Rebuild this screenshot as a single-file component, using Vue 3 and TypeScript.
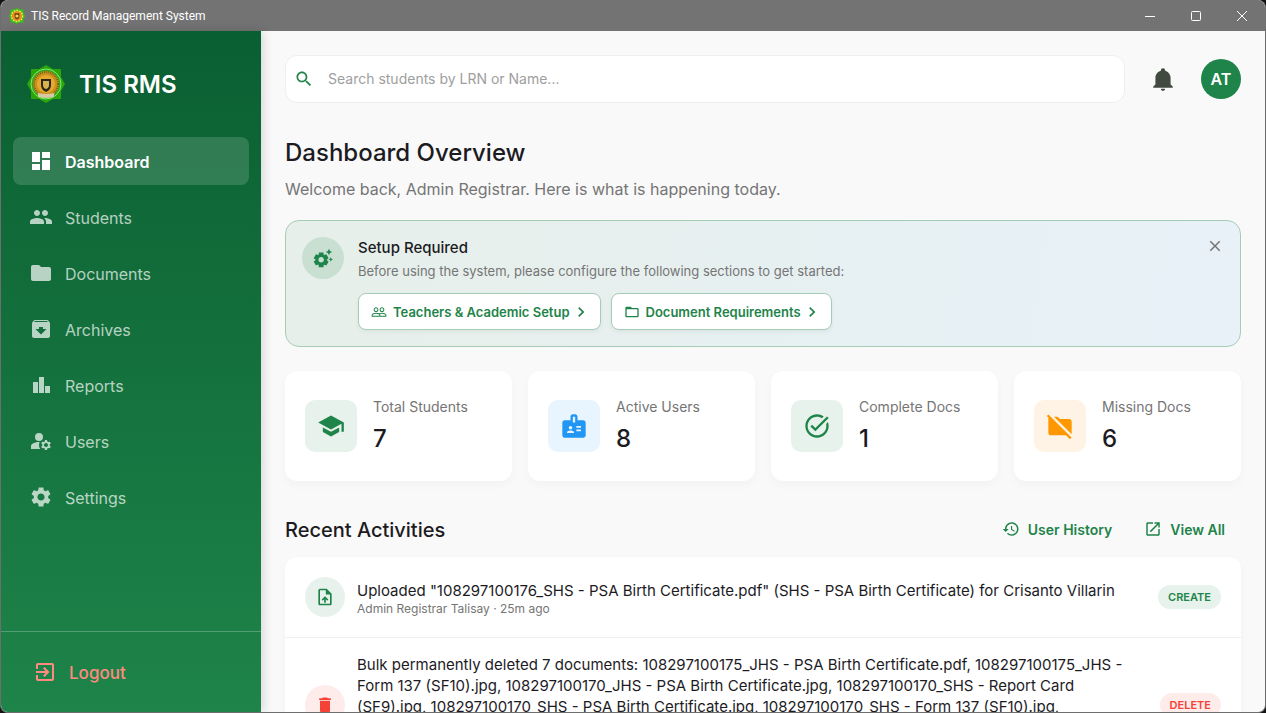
<script setup lang="ts">
import { ref } from 'vue'

interface NavItem {
  label: string
  icon: string
}

interface Stat {
  label: string
  value: number
  tone: string
  icon: string
}

interface Activity {
  lines: string[]
  meta: string
  action: string
  tone: string
  icon: string
}

const nav: NavItem[] = [
  { label: 'Dashboard', icon: 'M3 13h8V3H3v10zm0 8h8v-6H3v6zm10 0h8V11h-8v10zm0-18v6h8V3h-8z' },
  {
    label: 'Students',
    icon: 'M16 11c1.66 0 2.99-1.34 2.99-3S17.66 5 16 5c-1.66 0-3 1.34-3 3s1.34 3 3 3zm-8 0c1.66 0 2.99-1.34 2.99-3S9.66 5 8 5C6.34 5 5 6.34 5 8s1.34 3 3 3zm0 2c-2.33 0-7 1.17-7 3.5V19h14v-2.5c0-2.33-4.67-3.5-7-3.5zm8 0c-.29 0-.62.02-.97.05 1.16.84 1.97 1.97 1.97 3.45V19h6v-2.5c0-2.33-4.67-3.5-7-3.5z',
  },
  {
    label: 'Documents',
    icon: 'M10 4H4c-1.1 0-1.99.9-1.99 2L2 18c0 1.1.9 2 2 2h16c1.1 0 2-.9 2-2V8c0-1.1-.9-2-2-2h-8l-2-2z',
  },
  {
    label: 'Archives',
    icon: 'M20.54 5.23l-1.39-1.68C18.88 3.21 18.47 3 18 3H6c-.47 0-.88.21-1.16.55L3.46 5.23C3.17 5.57 3 6.02 3 6.5V19c0 1.1.9 2 2 2h14c1.1 0 2-.9 2-2V6.5c0-.48-.17-.93-.46-1.27zM12 17.5L6.5 12H10v-2h4v2h3.5L12 17.5zM5.12 5l.81-1h12l.94 1H5.12z',
  },
  { label: 'Reports', icon: 'M4 20V9h5v11zM10 20V4h5v16zM16 20v-7h5v7z' },
  {
    label: 'Users',
    icon: 'M10 4a4 4 0 1 0 0 8 4 4 0 0 0 0-8zM10.67 13.02C10.45 13.01 10.23 13 10 13c-2.42 0-4.68.67-6.61 1.82C2.51 15.34 2 16.32 2 17.35V20h9.26C10.47 18.87 10 17.49 10 16c0-1.07.25-2.07.67-2.98zM20.75 16c0-.22-.03-.42-.06-.63l1.14-1.01-1-1.73-1.45.49c-.32-.27-.68-.48-1.08-.63L18 11h-2l-.3 1.49c-.4.15-.76.36-1.08.63l-1.45-.49-1 1.73 1.14 1.01c-.03.21-.06.41-.06.63s.03.42.06.63l-1.14 1.01 1 1.73 1.45-.49c.32.27.68.48 1.08.63L16 21h2l.3-1.49c.4-.15.76-.36 1.08-.63l1.45.49 1-1.73-1.14-1.01c.03-.21.06-.41.06-.63zM17 18c-1.1 0-2-.9-2-2s.9-2 2-2 2 .9 2 2-.9 2-2 2z',
  },
  {
    label: 'Settings',
    icon: 'M19.14 12.94c.04-.3.06-.61.06-.94 0-.32-.02-.64-.07-.94l2.03-1.58c.18-.14.23-.41.12-.61l-1.92-3.32c-.12-.22-.37-.29-.59-.22l-2.39.96c-.5-.38-1.03-.7-1.62-.94l-.36-2.54c-.04-.24-.24-.41-.48-.41h-3.84c-.24 0-.43.17-.47.41l-.36 2.54c-.59.24-1.13.57-1.62.94l-2.39-.96c-.22-.08-.47 0-.59.22L2.74 8.87c-.12.21-.08.47.12.61l2.03 1.58c-.05.3-.09.63-.09.94s.02.64.07.94l-2.03 1.58c-.18.14-.23.41-.12.61l1.92 3.32c.12.22.37.29.59.22l2.39-.96c.5.38 1.03.7 1.62.94l.36 2.54c.05.24.24.41.48.41h3.84c.24 0 .44-.17.47-.41l.36-2.54c.59-.24 1.13-.56 1.62-.94l2.39.96c.22.08.47 0 .59-.22l1.92-3.32c.12-.22.07-.47-.12-.61l-2.01-1.58zM12 15.6c-1.98 0-3.6-1.62-3.6-3.6s1.62-3.6 3.6-3.6 3.6 1.62 3.6 3.6-1.62 3.6-3.6 3.6z',
  },
]

const stats: Stat[] = [
  {
    label: 'Total Students',
    value: 7,
    tone: 'green',
    icon: 'M5 13.18v4L12 21l7-3.82v-4L12 17l-7-3.82zM12 3L1 9l11 6 9-4.91V17h2V9L12 3z',
  },
  {
    label: 'Active Users',
    value: 8,
    tone: 'blue',
    icon: 'M20 7h-5V4c0-1.1-.9-2-2-2h-2c-1.1 0-2 .9-2 2v3H4c-1.1 0-2 .9-2 2v11c0 1.1.9 2 2 2h16c1.1 0 2-.9 2-2V9c0-1.1-.9-2-2-2zM9 12c.83 0 1.5.67 1.5 1.5S9.83 15 9 15s-1.5-.67-1.5-1.5S8.17 12 9 12zm3 6H6v-.75c0-1 2-1.5 3-1.5s3 .5 3 1.5V18zm1-9h-2V4h2v5zm5 7.5h-4V15h4v1.5zm0-3h-4V12h4v1.5z',
  },
  {
    label: 'Complete Docs',
    value: 1,
    tone: 'green',
    icon: 'M22 5.18L10.59 16.6l-4.24-4.24 1.41-1.41 2.83 2.83 10-10L22 5.18zm-2.21 5.04c.13.57.21 1.17.21 1.78 0 4.42-3.58 8-8 8s-8-3.58-8-8 3.58-8 8-8c1.58 0 3.04.46 4.28 1.25l1.44-1.44C16.1 2.67 14.13 2 12 2 6.48 2 2 6.48 2 12s4.48 10 10 10 10-4.48 10-10c0-1.19-.22-2.33-.6-3.39l-1.61 1.61z',
  },
  {
    label: 'Missing Docs',
    value: 6,
    tone: 'orange',
    icon: 'M20 6h-8l-2-2H6.83l14.93 14.93c.15-.28.24-.59.24-.93V8c0-1.1-.9-2-2-2zM2.1 2.1.69 3.51 2.2 5.02C2.08 5.3 2 5.65 2 6v12c0 1.1.9 2 2 2h13.17l3.31 3.31 1.41-1.41L2.1 2.1z',
  },
]

const activities: Activity[] = [
  {
    lines: ['Uploaded "108297100176_SHS - PSA Birth Certificate.pdf" (SHS - PSA Birth Certificate) for Crisanto Villarin'],
    meta: 'Admin Registrar Talisay · 25m ago',
    action: 'CREATE',
    tone: 'green',
    icon: 'M14 2H6c-1.1 0-1.99.9-1.99 2L4 20c0 1.1.89 2 1.99 2H18c1.1 0 2-.9 2-2V8l-6-6zm4 18H6V4h7v5h5v11zM8 15.01l1.41 1.41L11 14.84V19h2v-4.16l1.59 1.59L16 15.01 12.01 11 8 15.01z',
  },
  {
    lines: [
      'Bulk permanently deleted 7 documents: 108297100175_JHS - PSA Birth Certificate.pdf, 108297100175_JHS -',
      'Form 137 (SF10).jpg, 108297100170_JHS - PSA Birth Certificate.jpg, 108297100170_SHS - Report Card',
      '(SF9).jpg, 108297100170_SHS - PSA Birth Certificate.jpg, 108297100170_SHS - Form 137 (SF10).jpg,',
    ],
    meta: '',
    action: 'DELETE',
    tone: 'red',
    icon: 'M6 19c0 1.1.9 2 2 2h8c1.1 0 2-.9 2-2V7H6v12zM19 4h-3.5l-1-1h-5l-1 1H5v2h14V4z',
  },
]

const active = ref('Dashboard')
const query = ref('')
const setupVisible = ref(true)
</script>

<template>
  <div class="window">
    <header class="titlebar">
      <svg class="titlebar-logo" viewBox="0 0 40 40" aria-hidden="true">
        <path d="M20 0l7 4h9v9l4 7-4 7v9h-9l-7 4-7-4H4v-9l-4-7 4-7V4h9z" fill="#35c512" />
        <circle cx="20" cy="20" r="14" fill="#e8901c" stroke="#e6f36a" stroke-width="3" stroke-dasharray="4 3" />
        <path d="M14 13h12v8q0 6-6 8-6-2-6-8z" fill="#6b3d13" />
        <circle cx="20" cy="20" r="4" fill="#f2d25a" />
      </svg>
      <span class="titlebar-text">TIS Record Management System</span>
      <button class="caption" type="button" aria-label="Minimize">
        <svg width="12" height="12" viewBox="0 0 12 12"><path d="M1 6.5h10" /></svg>
      </button>
      <button class="caption" type="button" aria-label="Maximize">
        <svg width="12" height="12" viewBox="0 0 12 12"><rect x="1.5" y="1.5" width="9" height="9" rx="1" /></svg>
      </button>
      <button class="caption" type="button" aria-label="Close window">
        <svg width="12" height="12" viewBox="0 0 12 12"><path d="M1 1l10 10M11 1L1 11" /></svg>
      </button>
    </header>

    <div class="body">
      <aside class="sidebar">
        <div class="brand">
          <svg width="40" height="40" viewBox="0 0 40 40" aria-hidden="true">
            <path d="M20 1l7 4h7q1 0 1 1v7l4 7-4 7v7q0 1-1 1h-7l-7 4-7-4H6q-1 0-1-1v-7l-4-7 4-7V6q0-1 1-1h7z" fill="#2aa50b" />
            <circle cx="20" cy="20" r="15" fill="#35a51a" stroke="#7dee6a" stroke-width="1" />
            <circle cx="20" cy="20" r="13" fill="#c9921f" />
            <circle cx="20" cy="20" r="12" fill="none" stroke="#6e6418" stroke-width="2" stroke-dasharray="1 1" />
            <circle cx="20" cy="20" r="9" fill="#e9a82c" />
            <path d="M15 15h10v6q0 5-5 7-5-2-5-7z" fill="#2b2817" />
            <path d="M17 17h6v4q0 3-3 4-3-1-3-4z" fill="#d9b352" />
            <path d="M12 29q8 2 16 0v4q-8 2-16 0z" fill="#d6c8a4" />
          </svg>
          <span class="brand-name">TIS RMS</span>
        </div>

        <nav class="nav">
          <a
            v-for="item in nav"
            :key="item.label"
            href="#"
            class="nav-item"
            :class="{ active: active === item.label }"
            @click.prevent="active = item.label"
          >
            <svg width="24" height="24" viewBox="0 0 24 24" aria-hidden="true"><path :d="item.icon" /></svg>
            <span>{{ item.label }}</span>
          </a>
        </nav>

        <div class="logout-area">
          <button class="logout" type="button">
            <svg width="24" height="24" viewBox="0 0 24 24" aria-hidden="true">
              <path d="M10.09 15.59L11.5 17l5-5-5-5-1.41 1.41L12.67 11H3v2h9.67l-2.58 2.59zM19 3H5c-1.11 0-2 .9-2 2v4h2V5h14v14H5v-4H3v4c0 1.1.89 2 2 2h14c1.1 0 2-.9 2-2V5c0-1.1-.9-2-2-2z" />
            </svg>
            <span>Logout</span>
          </button>
        </div>
      </aside>

      <main class="main">
        <div class="topbar">
          <label class="search">
            <svg width="20" height="20" viewBox="0 0 24 24" aria-hidden="true">
              <path d="M15.5 14h-.79l-.28-.27C15.41 12.59 16 11.11 16 9.5 16 5.91 13.09 3 9.5 3S3 5.91 3 9.5 5.91 16 9.5 16c1.61 0 3.09-.59 4.23-1.57l.27.28v.79l5 4.99L20.49 19l-4.99-5zm-6 0C7.01 14 5 11.99 5 9.5S7.01 5 9.5 5 14 7.01 14 9.5 11.99 14 9.5 14z" />
            </svg>
            <input v-model="query" type="text" placeholder="Search students by LRN or Name..." aria-label="Search students" />
          </label>
          <button class="bell" type="button" aria-label="Notifications">
            <svg width="26" height="26" viewBox="0 0 24 24">
              <path d="M21 19v1H3v-1l2-2v-6c0-3.1 2.03-5.83 5-6.71V4a2 2 0 0 1 4 0v.29c2.97.88 5 3.61 5 6.71v6l2 2M14 21a2 2 0 0 1-4 0" />
            </svg>
          </button>
          <button class="avatar" type="button">AT</button>
        </div>

        <h1>Dashboard Overview</h1>
        <p class="welcome">Welcome back, Admin Registrar. Here is what is happening today.</p>

        <section v-if="setupVisible" class="setup">
          <div class="setup-icon">
            <svg width="22" height="22" viewBox="0 0 24 24" aria-hidden="true">
              <path d="M17.41 6.59L15 5.5l2.41-1.09L18.5 2l1.09 2.41L22 5.5l-2.41 1.09L18.5 9l-1.09-2.41zm3.87 6.13L20.5 11l-.78 1.72-1.72.78 1.72.78.78 1.72.78-1.72L23 13.5l-1.72-.78zm-5.04 1.65l1.94 1.47-2.5 4.33-2.24-.94c-.2.13-.42.26-.64.37l-.3 2.4h-5l-.3-2.41c-.22-.11-.43-.23-.64-.37l-2.24.94-2.5-4.33 1.94-1.47c-.01-.11-.01-.24-.01-.36s0-.25.01-.37l-1.94-1.47 2.5-4.33 2.24.94c.2-.13.42-.26.64-.37L7.5 6h5l.3 2.41c.22.11.43.23.64.37l2.24-.94 2.5 4.33-1.94 1.47c.01.12.01.24.01.36s0 .25-.01.37zM13 14c0-1.66-1.34-3-3-3s-3 1.34-3 3 1.34 3 3 3 3-1.34 3-3z" />
            </svg>
          </div>
          <div class="setup-content">
            <h2>Setup Required</h2>
            <p>Before using the system, please configure the following sections to get started:</p>
            <div class="setup-actions">
              <button type="button">
                <svg width="16" height="16" viewBox="0 0 24 24" aria-hidden="true">
                  <path d="M16.5 13c-1.2 0-3.07.34-4.5 1-1.43-.67-3.3-1-4.5-1C5.33 13 1 14.08 1 16.25V19h22v-2.75c0-2.17-4.33-3.25-6.5-3.25zm-4 4.5h-10v-1.25c0-.54 2.56-1.75 5-1.75s5 1.21 5 1.75v1.25zm9 0H14v-1.25c0-.46-.2-.86-.52-1.22.88-.3 1.96-.53 3.02-.53 2.44 0 5 1.21 5 1.75v1.25zM7.5 12c1.93 0 3.5-1.57 3.5-3.5S9.43 5 7.5 5 4 6.57 4 8.5 5.57 12 7.5 12zm0-5.5c1.1 0 2 .9 2 2s-.9 2-2 2-2-.9-2-2 .9-2 2-2zm9 5.5c1.93 0 3.5-1.57 3.5-3.5S18.43 5 16.5 5 13 6.57 13 8.5s1.57 3.5 3.5 3.5zm0-5.5c1.1 0 2 .9 2 2s-.9 2-2 2-2-.9-2-2 .9-2 2-2z" />
                </svg>
                <span>Teachers &amp; Academic Setup</span>
                <svg width="10" height="20" viewBox="6 0 12 24" aria-hidden="true">
                  <path d="M10 6L8.59 7.41 13.17 12l-4.58 4.59L10 18l6-6z" />
                </svg>
              </button>
              <button type="button">
                <svg width="16" height="16" viewBox="0 0 24 24" aria-hidden="true">
                  <path d="M20 6h-8l-2-2H4c-1.1 0-1.99.9-1.99 2L2 18c0 1.1.9 2 2 2h16c1.1 0 2-.9 2-2V8c0-1.1-.9-2-2-2zm0 12H4V8h16v10z" />
                </svg>
                <span>Document Requirements</span>
                <svg width="10" height="20" viewBox="6 0 12 24" aria-hidden="true">
                  <path d="M10 6L8.59 7.41 13.17 12l-4.58 4.59L10 18l6-6z" />
                </svg>
              </button>
            </div>
          </div>
          <button class="dismiss" type="button" aria-label="Dismiss" @click="setupVisible = false">
            <svg width="18" height="18" viewBox="0 0 24 24">
              <path d="M19 6.41L17.59 5 12 10.59 6.41 5 5 6.41 10.59 12 5 17.59 6.41 19 12 13.41 17.59 19 19 17.59 13.41 12z" />
            </svg>
          </button>
        </section>

        <section class="stats">
          <article v-for="stat in stats" :key="stat.label" class="stat">
            <div class="stat-icon" :class="stat.tone">
              <svg width="28" height="28" viewBox="0 0 24 24" aria-hidden="true"><path :d="stat.icon" /></svg>
            </div>
            <div class="stat-text">
              <div class="stat-label">{{ stat.label }}</div>
              <div class="stat-value">{{ stat.value }}</div>
            </div>
          </article>
        </section>

        <div class="recent-head">
          <h2>Recent Activities</h2>
          <button type="button">
            <svg width="18" height="18" viewBox="0 0 24 24" aria-hidden="true">
              <path d="M13 3c-4.97 0-9 4.03-9 9H1l3.89 3.89.07.14L9 12H6c0-3.87 3.13-7 7-7s7 3.13 7 7-3.13 7-7 7c-1.93 0-3.68-.79-4.94-2.06l-1.42 1.42C8.27 19.99 10.51 21 13 21c4.97 0 9-4.03 9-9s-4.03-9-9-9zm-1 5v5l4.28 2.54.72-1.21-3.5-2.08V8H12z" />
            </svg>
            <span>User History</span>
          </button>
          <button type="button">
            <svg width="18" height="18" viewBox="0 0 24 24" aria-hidden="true">
              <path d="M19 19H5V5h7V3H5c-1.11 0-2 .9-2 2v14c0 1.1.89 2 2 2h14c1.1 0 2-.9 2-2v-7h-2v7zM14 3v2h3.59l-9.83 9.83 1.41 1.41L19 6.41V10h2V3h-7z" />
            </svg>
            <span>View All</span>
          </button>
        </div>

        <ul class="activities">
          <li v-for="item in activities" :key="item.action" :class="{ long: item.lines.length > 1 }">
            <div class="activity-icon" :class="item.tone">
              <svg width="20" height="20" viewBox="0 0 24 24" aria-hidden="true"><path :d="item.icon" /></svg>
            </div>
            <div class="activity-text">
              <div v-for="line in item.lines" :key="line" class="activity-line">{{ line }}</div>
              <div v-if="item.meta" class="activity-meta">{{ item.meta }}</div>
            </div>
            <span class="badge" :class="item.tone">{{ item.action }}</span>
          </li>
        </ul>
      </main>
    </div>
  </div>
</template>

<style>
body {
  margin: 0;
  background: #141414;
}
</style>

<style scoped>
.window {
  box-sizing: border-box;
  height: 100vh;
  display: flex;
  flex-direction: column;
  overflow: hidden;
  border-radius: 8px;
  border: 1px solid #6e6e6e;
  border-top: 0;
  background: #f9f9f9;
  color: #1c1b1f;
  font-family: Inter, 'Liberation Sans', sans-serif;
}

button {
  font-family: inherit;
  border: 0;
  padding: 0;
  background: none;
  cursor: pointer;
}

svg {
  flex: none;
  fill: currentColor;
}

h1,
h2,
p,
ul {
  margin: 0;
  padding: 0;
}

.titlebar {
  flex: none;
  height: 31px;
  display: flex;
  align-items: center;
  background: #737373;
  color: #fff;
}

.titlebar-logo {
  width: 16px;
  height: 16px;
  margin: 0 6px 0 8px;
}

.titlebar-text {
  flex: 1;
  font: 12px/16px Roboto, 'Noto Sans', sans-serif;
}

.caption {
  width: 46px;
  height: 31px;
  display: grid;
  place-items: center;
  color: #fff;
}

.caption svg {
  fill: none;
  stroke: currentColor;
}

.body {
  flex: 1;
  min-height: 0;
  display: flex;
}

.sidebar {
  flex: none;
  width: 260px;
  display: flex;
  flex-direction: column;
  background: linear-gradient(#0a5f32, #1e8449);
  box-shadow: 2px 0 10px rgba(0, 0, 0, 0.15);
  z-index: 1;
}

.brand {
  display: flex;
  align-items: center;
  gap: 13px;
  padding: 33px 25px;
}

.brand-name {
  padding-top: 2px;
  font-size: 24px;
  line-height: 36px;
  font-weight: 600;
  color: #fff;
}

.nav {
  flex: 1;
  display: flex;
  flex-direction: column;
  gap: 8px;
  padding: 0 12px;
}

.nav-item {
  display: flex;
  align-items: center;
  gap: 12px;
  height: 48px;
  padding: 0 16px;
  border-radius: 8px;
  color: rgba(255, 255, 255, 0.7);
  font-size: 16px;
  line-height: 24px;
  font-weight: 400;
  text-decoration: none;
}

.nav-item span {
  padding-top: 1px;
}

.nav-item.active {
  background: rgba(255, 255, 255, 0.15);
  color: #fff;
  font-weight: 600;
}

.logout-area {
  border-top: 1px solid rgba(255, 255, 255, 0.24);
  padding: 16px;
}

.logout {
  width: 100%;
  height: 48px;
  display: flex;
  align-items: center;
  gap: 12px;
  padding: 0 16px;
  color: #ff8a80;
  font-size: 17px;
  line-height: 24px;
  font-weight: 500;
}

.logout span {
  padding-top: 1px;
}

.main {
  flex: 1;
  min-width: 0;
  overflow: hidden;
  padding: 24px;
}

.topbar {
  display: flex;
  align-items: center;
  gap: 16px;
  margin-bottom: 32px;
}

.search {
  flex: 1;
  display: flex;
  align-items: center;
  gap: 14px;
  box-sizing: border-box;
  height: 48px;
  padding: 0 9px 0 8px;
  border: 1px solid #eee;
  border-radius: 12px;
  background: #fff;
  color: #1e8449;
}

.search input {
  flex: 1;
  min-width: 0;
  padding: 0;
  border: 0;
  outline: 0;
  background: none;
  color: #1c1b1f;
  font: 14px/20px Inter, 'Liberation Sans', sans-serif;
}

.search input::placeholder {
  color: #9e9e9e;
  opacity: 1;
}

.bell {
  width: 44px;
  height: 44px;
  display: grid;
  place-items: center;
  color: #414941;
}

.avatar {
  width: 40px;
  height: 40px;
  border-radius: 50%;
  background: #1e8449;
  color: #fff;
  font-size: 16px;
  font-weight: 600;
}

h1 {
  font-size: 24px;
  line-height: 36px;
  font-weight: 500;
}

.welcome {
  margin-top: 6px;
  font-size: 16px;
  line-height: 24px;
  color: #757575;
}

.setup {
  display: flex;
  align-items: flex-start;
  gap: 14px;
  margin-top: 19px;
  padding: 16px;
  border: 1px solid #a5cdb6;
  border-radius: 14px;
  background: linear-gradient(98deg, #e6efe9, #e8f1f8);
}

.setup-icon {
  width: 42px;
  height: 42px;
  display: grid;
  place-items: center;
  border-radius: 50%;
  background: #c8dfd1;
  color: #1e8449;
}

.setup-content {
  flex: 1;
}

.setup h2 {
  font-size: 15px;
  line-height: 22px;
  font-weight: 500;
}

.setup p {
  margin-top: 2px;
  font-size: 13px;
  line-height: 20px;
  color: #757575;
}

.setup-actions {
  display: flex;
  gap: 10px;
  margin-top: 12px;
}

.setup-actions button {
  display: flex;
  align-items: center;
  gap: 6px;
  height: 37px;
  padding: 0 14px 0 12px;
  border: 1px solid #a5cdb6;
  border-radius: 8px;
  background: #fff;
  box-shadow: 0 2px 4px rgba(0, 0, 0, 0.05);
  color: #1e8449;
  font-size: 13px;
  font-weight: 600;
}

.dismiss {
  height: 18px;
  color: #757575;
}

.stats {
  display: grid;
  grid-template-columns: repeat(4, 1fr);
  gap: 16px;
  margin-top: 24px;
}

.stat {
  display: flex;
  align-items: center;
  gap: 16px;
  padding: 20px;
  height: 70px;
  border-radius: 12px;
  background: #fff;
  box-shadow: 0 4px 10px rgba(0, 0, 0, 0.03);
}

.stat-icon {
  width: 52px;
  height: 52px;
  display: grid;
  place-items: center;
  border-radius: 10px;
}

.stat-text {
  padding-top: 2px;
}

.stat-label {
  font-size: 14px;
  line-height: 20px;
  color: #757575;
}

.stat-value {
  margin-top: 4px;
  font-size: 24px;
  line-height: 36px;
  font-weight: 500;
}

.green {
  background: #e8f2ec;
  color: #1e8449;
}

.blue {
  background: #e8f4fe;
  color: #2196f3;
}

.orange {
  background: #fff3e5;
  color: #ff9800;
}

.red {
  background: #feeceb;
  color: #f44336;
}

.recent-head {
  display: flex;
  align-items: center;
  gap: 32px;
  margin-top: 32px;
  padding-right: 16px;
}

.recent-head h2 {
  flex: 1;
  font-size: 20px;
  line-height: 34px;
  font-weight: 500;
}

.recent-head button {
  display: flex;
  align-items: center;
  gap: 8px;
  padding-bottom: 2px;
  color: #1e8449;
  font-size: 14px;
  font-weight: 600;
}

.activities {
  margin-top: 10px;
  list-style: none;
  border-radius: 12px;
  background: #fff;
  box-shadow: 0 4px 10px rgba(0, 0, 0, 0.03);
}

.activities li {
  display: flex;
  align-items: center;
  gap: 12px;
  padding: 20px;
}

.activities li + li {
  border-top: 1px solid #eee;
}

.activities li.long {
  min-height: 101px;
  padding: 16px 20px;
}

.activity-icon {
  flex: none;
  width: 40px;
  height: 40px;
  display: grid;
  place-items: center;
  border-radius: 50%;
}

.activity-text {
  flex: 1;
  min-width: 0;
  padding-top: 3px;
}

.long .activity-text {
  align-self: flex-start;
  padding-top: 0;
}

.activity-line {
  font-size: 15px;
  line-height: 21px;
  white-space: nowrap;
}

.activity-meta {
  font-size: 12px;
  line-height: 16px;
  color: #757575;
}

.badge {
  padding: 0 10px;
  border-radius: 12px;
  font-size: 11px;
  line-height: 24px;
  font-weight: 600;
}
</style>
